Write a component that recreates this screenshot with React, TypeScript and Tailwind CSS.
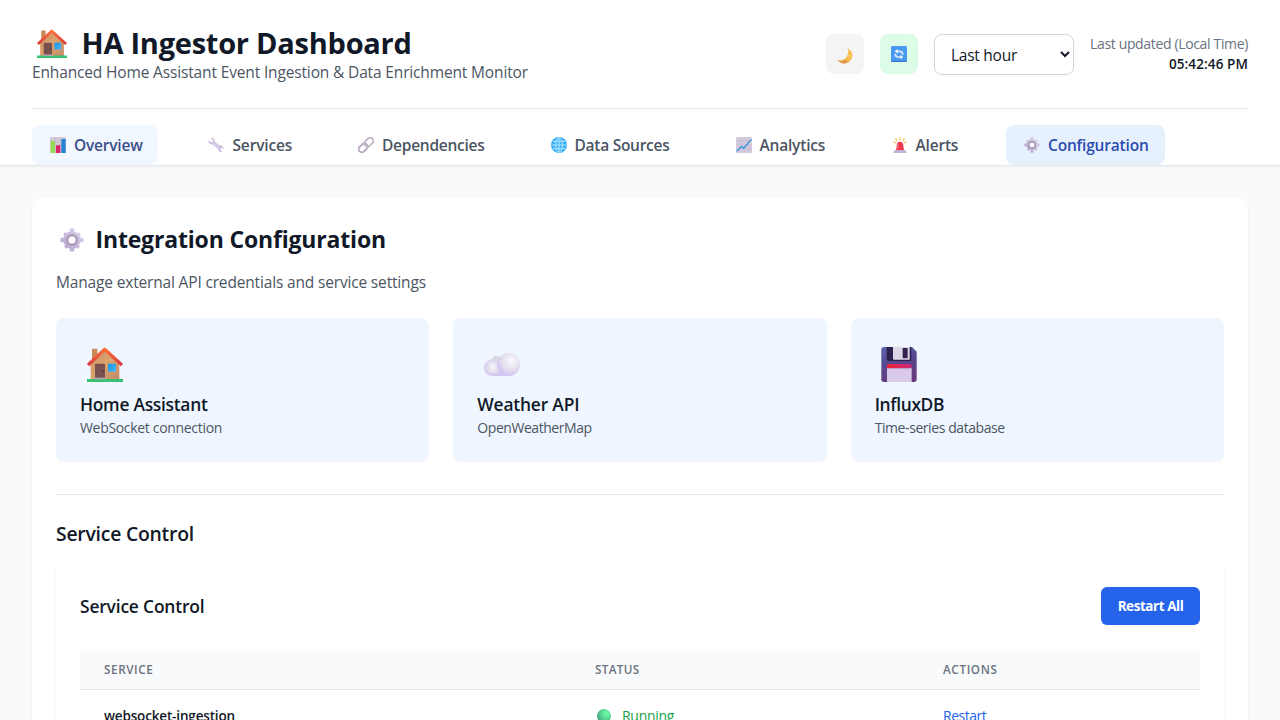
import type { ReactNode } from "react";

type IconProps = { className: string };

function House({ className }: IconProps) {
  return (
    <svg className={className} viewBox="0 0 108 105">
      <defs>
        <linearGradient id="houseWall" x1="0" y1="0" x2="1" y2="1">
          <stop offset="0" stopColor="#c98f60" />
          <stop offset="0.5" stopColor="#dca36f" />
          <stop offset="1" stopColor="#c08a66" />
        </linearGradient>
        <linearGradient id="houseRoof" x1="0" y1="0" x2="0" y2="1">
          <stop offset="0" stopColor="#ff7038" />
          <stop offset="1" stopColor="#d83a3c" />
        </linearGradient>
        <linearGradient id="houseGlass" x1="0" y1="0" x2="1" y2="1">
          <stop offset="0" stopColor="#1593e6" />
          <stop offset="1" stopColor="#48b8fa" />
        </linearGradient>
      </defs>
      <rect x="15" y="5" width="16" height="42" rx="2" fill="#c98a55" />
      <path d="M11 48 53 8l44 42v48H11z" fill="url(#houseWall)" />
      <path d="M0 96h108v8q0 1-2 1H2q-2 0-2-1z" fill="#38c172" />
      <rect x="24" y="50" width="30" height="44" rx="3" fill="#77504f" />
      <rect x="21" y="92" width="36" height="5" fill="#b7a3ad" />
      <circle cx="48" cy="73" r="2.5" fill="#4a3035" />
      <rect x="63" y="50" width="24" height="24" rx="1" fill="url(#houseGlass)" />
      <path d="M3 54 53 7l52 47" fill="none" stroke="url(#houseRoof)" strokeWidth="10" strokeLinejoin="round" />
    </svg>
  );
}

function Cloud({ className }: IconProps) {
  return (
    <svg className={className} viewBox="0 0 108 69">
      <defs>
        <radialGradient id="cloudBig" cx="0.62" cy="0.35" r="0.68">
          <stop offset="0" stopColor="#fbfafd" />
          <stop offset="0.5" stopColor="#e7e3ee" />
          <stop offset="1" stopColor="#cdc2ef" />
        </radialGradient>
        <radialGradient id="cloudSmall" cx="0.55" cy="0.45" r="0.6">
          <stop offset="0" stopColor="#f8f6fb" />
          <stop offset="0.5" stopColor="#e6e1f0" />
          <stop offset="1" stopColor="#cfc4ee" />
        </radialGradient>
      </defs>
      <circle cx="37" cy="24" r="15" fill="#d9d8dc" />
      <path d="M24 40h55v29H24z" fill="#d2c7f0" />
      <circle cx="24" cy="44.5" r="24" fill="url(#cloudSmall)" />
      <circle cx="73.5" cy="34.5" r="34.5" fill="url(#cloudBig)" />
      <path d="M24 62h50l12 4-8 3H26z" fill="#d2c7f2" />
    </svg>
  );
}

function Floppy({ className }: IconProps) {
  return (
    <svg className={className} viewBox="0 0 106 105">
      <defs>
        <linearGradient id="floppyBody" x1="0" y1="0" x2="0.3" y2="1">
          <stop offset="0" stopColor="#5c62ae" />
          <stop offset="0.5" stopColor="#564790" />
          <stop offset="1" stopColor="#683c7c" />
        </linearGradient>
        <linearGradient id="floppyStrip">
          <stop offset="0" stopColor="#ee2336" />
          <stop offset="1" stopColor="#c92b7c" />
        </linearGradient>
      </defs>
      <path d="M8 0h84l14 14v83q0 8-8 8H8q-8 0-8-8V8q0-8 8-8z" fill="url(#floppyBody)" />
      <path d="M16 0h74v37q0 5-5 5H21q-5 0-5-5z" fill="#2e2150" />
      <path d="M35 0h50v38H38q-3 0-3-3z" fill="#ddd5e6" />
      <rect x="64" y="3" width="15" height="31" rx="2" fill="#35204f" />
      <path d="M17 62h74v43H17z" fill="#d9cbe8" />
      <path d="M17 56q0-5 5-5h64q5 0 5 5v8H17z" fill="url(#floppyStrip)" />
      <path d="M17 65h74" stroke="#b9a0cf" strokeWidth="3" />
    </svg>
  );
}

function Gear({ className }: IconProps) {
  return (
    <svg className={className} viewBox="0 0 48 48">
      <defs>
        <linearGradient id="gearBody" gradientUnits="userSpaceOnUse" x1="40" y1="8" x2="8" y2="40">
          <stop offset="0" stopColor="#d8cee6" />
          <stop offset="1" stopColor="#b9a9d0" />
        </linearGradient>
      </defs>
      <path
        d="M19.5 3q0-2 2-2h5q2 0 2 2v44h-9zM1 21.5q0-2 2-2h42q2 0 2 2v5q0 2-2 2H3q-2 0-2-2zM8 11l3-3 29 29-3 3q-2 2-4 0L8 15q-2-2 0-4zM40 11l-3-3L8 37l3 3q2 2 4 0l25-25q2-2 0-4z"
        fill="url(#gearBody)"
      />
      <circle cx="24" cy="24" r="17.5" fill="url(#gearBody)" />
      <circle cx="24" cy="24" r="9.5" fill="none" stroke="#ab9bb8" strokeWidth="5" />
      <circle cx="24" cy="24" r="7" fill="#fff" />
    </svg>
  );
}

function BarChart({ className }: IconProps) {
  return (
    <svg className={className} viewBox="0 0 48 48">
      <rect width="48" height="48" rx="4" fill="#d3cad9" />
      <path d="M0 12h48M0 24h48M16 0v48M32 0v48" stroke="#bcb2c4" strokeWidth="1.5" />
      <rect x="2" y="12" width="13" height="36" rx="1" fill="#92dd55" />
      <rect x="18" y="25" width="13" height="23" rx="1" fill="#dc2468" />
      <rect x="34" y="6" width="13" height="42" rx="1" fill="#2583d6" />
    </svg>
  );
}

function Wrench({ className }: IconProps) {
  return (
    <svg className={className} viewBox="0 0 48 48">
      <path
        d="M8 3l7 7-1 5-5 1-7-7c-2 6 1 12 7 13 3 1 5 0 7 1l14 13c0 6 5 12 13 9l-6-6 1-5 5-1 3 5c2-7-3-13-10-13-3 0-4 0-6-2L20 13C20 6 15 1 8 3z"
        fill="#cdbfe0"
      />
      <path d="M17 18 33 34" stroke="#e4ddec" strokeWidth="3" />
    </svg>
  );
}

function Chain({ className }: IconProps) {
  return (
    <svg className={className} viewBox="0 0 48 48">
      <g fill="none" strokeWidth="5.5" transform="rotate(-45 24 24)">
        <rect x="-3" y="14.5" width="30" height="19" rx="9.5" stroke="#b8a9be" />
        <rect x="21" y="14.5" width="30" height="19" rx="9.5" stroke="#c5b8cd" />
      </g>
    </svg>
  );
}

function Globe({ className }: IconProps) {
  return (
    <svg className={className} viewBox="0 0 48 48">
      <circle cx="24" cy="24" r="24" fill="#3eb0f8" />
      <g fill="none" stroke="#b0e6ff" strokeWidth="3">
        <ellipse cx="24" cy="24" rx="10" ry="21.5" />
        <path d="M24 2v44M2 24h44M6 13h36M6 35h36" />
      </g>
    </svg>
  );
}

function LineChart({ className }: IconProps) {
  return (
    <svg className={className} viewBox="0 0 48 48">
      <rect width="48" height="48" rx="4" fill="#d5cbdd" />
      <path d="M0 12h48M0 24h48M0 36h48M12 0v48M24 0v48M36 0v48" stroke="#bfb2c9" strokeWidth="1.5" />
      <path d="M2 43 16 28l7 6L46 7" fill="none" stroke="#2f8fdd" strokeWidth="4" strokeLinejoin="round" />
    </svg>
  );
}

function Siren({ className }: IconProps) {
  return (
    <svg className={className} viewBox="0 0 48 48">
      <path d="M24 1v8M11 4l4 7M37 4l-4 7M6 14l5 3M42 14l-5 3" stroke="#f3bf4b" strokeWidth="3.5" strokeLinecap="round" />
      <path d="M12 40l3-20q1-6 9-6t9 6l3 20z" fill="#f0374f" />
      <path d="M19 20q-2 7-2 15" stroke="#ff8d98" strokeWidth="3" fill="none" />
      <path d="M5 48v-4q0-5 6-5h26q6 0 6 5v4z" fill="#c3b0d6" />
    </svg>
  );
}

function Moon({ className }: IconProps) {
  return (
    <svg className={className} viewBox="0 0 48 48">
      <path d="M32 1c13 7 19 22 10 34C32 50 11 50 2 36c12 3 21-1 26-8 6-8 7-17 4-27z" fill="#f8bd55" />
      <path d="M2 36c8 12 26 14 37 3-7 3-13 2-17-1-6 2-13 1-20-2z" fill="#e8984b" />
      <circle cx="37" cy="23" r="3" fill="#ffda7c" />
      <circle cx="24" cy="38" r="3" fill="#d98345" />
    </svg>
  );
}

function Refresh({ className }: IconProps) {
  return (
    <svg className={className} viewBox="0 0 48 48">
      <rect width="48" height="48" rx="4" fill="#4a98f0" />
      <path d="M0 44h48q0 4-4 4H4q-4 0-4-4z" fill="#3b76d0" />
      <g fill="none" stroke="#dfeafa" strokeWidth="5">
        <path d="M18 16h8q9 0 9 8v2" />
        <path d="M30 33h-8q-9 0-9-8v-2" />
      </g>
      <path d="M20 9v14l-9-7zM28 26v14l9-7z" fill="#eef4fc" />
    </svg>
  );
}

function RunningDot({ className }: IconProps) {
  return (
    <svg className={className} viewBox="0 0 48 48">
      <defs>
        <radialGradient id="runningDot" cx="0.68" cy="0.32" r="0.75">
          <stop offset="0" stopColor="#76f9a2" />
          <stop offset="0.5" stopColor="#57d993" />
          <stop offset="1" stopColor="#4a9c85" />
        </radialGradient>
      </defs>
      <circle cx="24" cy="24" r="24" fill="url(#runningDot)" />
    </svg>
  );
}

const tabs = [
  { label: "Overview", Icon: BarChart, box: "w-[126px] bg-[#f0f7ff] text-[#3b4f86]", text: "tracking-[-0.21px]" },
  { label: "Services", Icon: Wrench, box: "w-[118px] text-[#4b5563]", text: "pl-[0.5px] tracking-[-0.15px]" },
  { label: "Dependencies", Icon: Chain, box: "w-[160.5px] text-[#4b5563]", text: "tracking-[-0.26px]" },
  { label: "Data Sources", Icon: Globe, box: "w-[153px] text-[#4b5563]", text: "tracking-[-0.27px]" },
  { label: "Analytics", Icon: LineChart, box: "w-[124px] text-[#4b5563]", text: "tracking-[-0.2px]" },
  { label: "Alerts", Icon: Siren, box: "w-[100.5px] text-[#4b5563]", text: "tracking-[-0.2px]" },
  { label: "Configuration", Icon: Gear, box: "w-[159px] bg-[#e7f1fe] text-[#2b4db0]", text: "tracking-[-0.18px]" },
];

function IntegrationCard({ icon, title, detail, titleTracking, detailTracking }: {
  icon: ReactNode;
  title: string;
  detail: string;
  titleTracking: string;
  detailTracking: string;
}) {
  return (
    <button className="flex h-36 flex-col items-start rounded-lg bg-[#eff6ff] px-6 pt-6 text-left">
      <span className="flex h-[49px] items-center pl-[6.5px] pb-[4px]">{icon}</span>
      <span className={`text-[17.4px] leading-[26px] font-semibold text-gray-900 ${titleTracking}`}>{title}</span>
      <span className={`mt-px text-[14px] leading-5 text-[#4b5563] ${detailTracking}`}>{detail}</span>
    </button>
  );
}

export default function App() {
  return (
    <div className="h-[720px] overflow-hidden bg-[#f9fafb] font-['Open_Sans','Noto_Sans',sans-serif] whitespace-nowrap text-[#111827]">
      <header className="h-[166px] border-b border-[#e5e7eb] bg-white px-8 shadow-[0_1px_2px_0_rgb(0_0_0/0.05)]">
        <div className="flex h-[109px] items-start justify-between border-b border-[#e5e7eb]">
          <div className="pt-[25px]">
            <h1 className="flex h-9 items-center pl-[5px] text-[29px] leading-9 font-bold tracking-[-0.25px]">
              <House className="mr-[14.5px] h-[29px] w-[30px]" />
              HA Ingestor Dashboard
            </h1>
            <p className="text-[15.5px] leading-[23px] tracking-[-0.15px] text-[#4b5563]">
              Enhanced Home Assistant Event Ingestion &amp; Data Enrichment Monitor
            </p>
          </div>
          <div className="flex gap-4 pt-[34px]">
            <button aria-label="Dark mode" className="flex h-10 w-[38px] items-center justify-center rounded-lg bg-[#f3f4f6]">
              <Moon className="mt-[3px] h-4 w-4" />
            </button>
            <button aria-label="Auto refresh" className="flex h-10 w-[38px] items-center justify-center rounded-lg bg-[#dcfce7]">
              <Refresh className="h-4 w-4" />
            </button>
            <select className="h-[41px] w-[140px] rounded-lg border border-[#d1d5db] bg-white px-3 pt-px text-[15.5px] tracking-[-0.26px] text-[#111827]">
              <option>Last hour</option>
            </select>
            <div className="text-right text-[14px] leading-5">
              <div className="tracking-[-0.346px] text-[#6b7280]">Last updated (Local Time)</div>
              <div className="text-[13.5px] leading-5 font-semibold tracking-[0.1px]">05:42:46 PM</div>
            </div>
          </div>
        </div>
        <nav className="flex gap-8 pt-4">
          {tabs.map(({ label, Icon, box, text }) => (
            <button key={label} className={`flex h-10 shrink-0 items-center rounded-lg pl-[18px] text-[15.5px] font-semibold ${box}`}>
              <Icon className="mr-2 h-4 w-4 shrink-0" />
              <span className={`pt-[2px] ${text}`}>{label}</span>
            </button>
          ))}
        </nav>
      </header>

      <main className="px-8 pt-8">
        <section className="h-[640px] rounded-lg bg-white px-6 pt-6 shadow-[0_1px_3px_0_rgb(0_0_0/0.06)]">
          <h2 className="flex h-9 items-center pl-1 text-[23px] leading-9 font-bold tracking-[-0.17px]">
            <Gear className="mr-3 h-6 w-6" />
            <span className="-ml-[0.5px] pb-[2px]">Integration Configuration</span>
          </h2>
          <p className="mt-3 text-[15.5px] leading-6 tracking-[-0.165px] text-[#4b5563]">
            Manage external API credentials and service settings
          </p>
          <div className="mt-6 grid grid-cols-3 gap-6">
            <IntegrationCard icon={<House className="h-[35px] w-9" />} title="Home Assistant" detail="WebSocket connection" titleTracking="tracking-[-0.28px]" detailTracking="tracking-[-0.32px]" />
            <IntegrationCard icon={<Cloud className="h-[23px] w-9" />} title="Weather API" detail="OpenWeatherMap" titleTracking="tracking-[-0.19px]" detailTracking="tracking-[-0.45px]" />
            <IntegrationCard icon={<Floppy className="h-[35px] w-9" />} title="InfluxDB" detail="Time-series database" titleTracking="tracking-[-0.36px]" detailTracking="tracking-[-0.42px]" />
          </div>
          <div className="mt-8 border-t border-[#e5e7eb] pt-[25px]">
            <h3 className="text-[19.4px] leading-7 font-semibold tracking-[-0.24px]">Service Control</h3>
            <div className="mt-[15px] h-[300px] rounded-lg bg-white px-6 pt-6 shadow-[0_1px_3px_0_rgb(0_0_0/0.06)]">
              <div className="flex h-[38px] items-center justify-between">
                <h4 className="text-[17.4px] leading-7 font-semibold tracking-[-0.17px]">Service Control</h4>
                <button className="h-[38px] w-[99px] rounded-md bg-[#2563eb] text-center text-[13.5px] font-bold tracking-[-0.45px] text-white">
                  Restart All
                </button>
              </div>
              <div className="mt-6 grid h-[41px] grid-cols-[491px_348px_281px] items-center border-b border-[#e5e7eb] bg-[#f9fafb] pt-[2px] text-[11.7px] font-semibold text-[#6b7280]">
                <div className="pl-6 tracking-[0.6px]">SERVICE</div>
                <div className="pl-6 tracking-[0.33px]">STATUS</div>
                <div className="pl-6 tracking-[0.63px]">ACTIONS</div>
              </div>
              <div className="grid grid-cols-[491px_348px_281px] items-center pt-4 text-[14px] leading-5">
                <div className="pl-6 text-[13.5px] font-semibold tracking-[-0.16px]">websocket-ingestion</div>
                <div className="flex items-center pl-[26px] tracking-[-0.3px] text-[#16a34a]">
                  <RunningDot className="mr-[11px] h-3.5 w-3.5" />
                  Running
                </div>
                <div className="pl-6 tracking-[-0.5px] text-[#2563eb]">Restart</div>
              </div>
            </div>
          </div>
        </section>
      </main>
    </div>
  );
}
